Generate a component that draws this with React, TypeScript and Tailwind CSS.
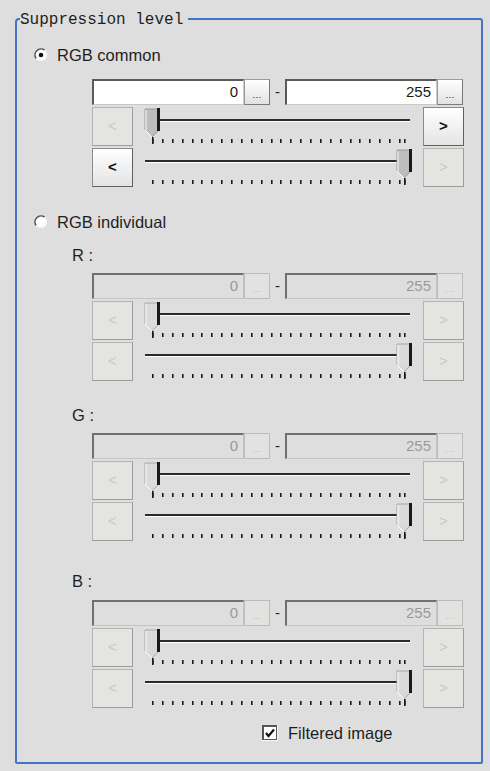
import React from "react";

const TICKS: number[] = Array.from({ length: 26 }, (_, i) => 19 + i * 9.88);

function Thumb({ x, disabled }: { x: number; disabled: boolean }) {
  const fill = disabled ? "#d8d8d8" : "#bdbdbd";
  return (
    <g>
      <polygon
        points={`${x},2 ${x + 14},2 ${x + 14},23 ${x + 7},30 ${x},23`}
        fill={fill}
        stroke={disabled ? "#a8a8a8" : "#9a9a9a"}
        strokeWidth="1"
      />
      <line x1={x + 1} y1={3} x2={x + 1} y2={23} stroke="#ffffff" strokeWidth="1" />
      <line x1={x + 7} y1={30} x2={x} y2={23} stroke="#ffffff" strokeWidth="1" />
      <rect x={x + 12} y={1} width={3} height={23} fill="#1a1a1a" />
      {disabled && (
        <g opacity="0.5">
          {Array.from({ length: 10 }, (_, k) => (
            <line key={k} x1={x + 2} y1={4 + k * 2} x2={x + 11} y2={4 + k * 2} stroke="#ffffff" strokeWidth="0.6" strokeDasharray="1 1" />
          ))}
        </g>
      )}
    </g>
  );
}

function SliderTrack({ pos, disabled }: { pos: "left" | "right"; disabled: boolean }) {
  const thumbX = pos === "left" ? 12 : 264;
  const tallTick = pos === "left" ? 19 : 271;
  return (
    <svg width="290" height="41" viewBox="0 0 290 41" className="block">
      {pos === "left" ? (
        <g>
          <rect x={26} y={12} width={251} height={2} fill="#2a2a2a" />
          <rect x={26} y={14} width={251} height={1} fill="#ffffff" />
        </g>
      ) : (
        <g>
          <rect x={12} y={12} width={253} height={2} fill="#2a2a2a" />
          <rect x={12} y={14} width={253} height={1} fill="#ffffff" />
        </g>
      )}
      {TICKS.map((t, i) => (
        <rect key={i} x={Math.round(t)} y={32} width={1.6} height={4} fill="#1a1a1a" />
      ))}
      <rect x={271} y={32} width={1.6} height={4} fill="#1a1a1a" />
      <rect x={tallTick} y={30} width={1.6} height={7} fill="#1a1a1a" />
      <Thumb x={thumbX} disabled={disabled} />
    </svg>
  );
}

function ArrowButton({ label, enabled }: { label: string; enabled: boolean }) {
  return enabled ? (
    <div className="w-[41px] h-[39px] flex items-center justify-center border border-[#8a8a8a] border-r-[#606060] border-b-[#606060] bg-gradient-to-b from-[#ffffff] to-[#e4e4e4] text-[15px] font-bold text-[#111] [font-family:'Liberation_Sans',Arial,sans-serif]">
      {label}
    </div>
  ) : (
    <div className="w-[41px] h-[39px] flex items-center justify-center border border-[#b4b4b4] border-r-[#9c9c9c] border-b-[#9c9c9c] bg-[#e4e4e0] text-[15px] text-[#c8c8c8] [font-family:'Liberation_Sans',Arial,sans-serif]">
      {label}
    </div>
  );
}

function DotsButton({ disabled }: { disabled: boolean }) {
  return (
    <div
      className={
        disabled
          ? "w-[26px] h-[26px] border border-[#bcbcbc] bg-[#e2e2e0] flex items-end justify-center pb-[6px]"
          : "w-[26px] h-[26px] border border-[#9a9a9a] border-r-[#7a7a7a] border-b-[#7a7a7a] bg-gradient-to-b from-[#ffffff] to-[#e2e2e2] flex items-end justify-center pb-[6px]"
      }
    >
      <div className="flex gap-[1px]">
        <span className={disabled ? "w-[2px] h-[1px] bg-[#d0d0d0]" : "w-[2px] h-[1px] bg-[#8a8a8a]"} />
        <span className={disabled ? "w-[2px] h-[1px] bg-[#d0d0d0]" : "w-[2px] h-[1px] bg-[#8a8a8a]"} />
        <span className={disabled ? "w-[2px] h-[1px] bg-[#d0d0d0]" : "w-[2px] h-[1px] bg-[#8a8a8a]"} />
      </div>
    </div>
  );
}

function ValueBox({ value, disabled }: { value: string; disabled: boolean }) {
  return (
    <div
      className={
        disabled
          ? "w-[152px] h-[26px] border-t-2 border-l-2 border-t-[#707070] border-l-[#707070] border-r border-b border-r-[#c4c4c4] border-b-[#c4c4c4] bg-[#dedede] flex items-center justify-end pr-[5px] text-[15px] text-[#9a9a9a] [font-family:'Liberation_Sans',Arial,sans-serif]"
          : "w-[152px] h-[26px] border-t-2 border-l-2 border-t-[#5a5a5a] border-l-[#5a5a5a] border-r border-b border-r-[#c8c8c8] border-b-[#c8c8c8] bg-white flex items-center justify-end pr-[5px] text-[15px] text-[#1a1a1a] [font-family:'Liberation_Sans',Arial,sans-serif]"
      }
    >
      {value}
    </div>
  );
}

function RangeControl({ disabled, topMargin }: { disabled: boolean; topMargin: string }) {
  return (
    <div className={`ml-[75px] flex flex-col ${topMargin}`}>
      <div className="flex items-center h-[26px]">
        <ValueBox value="0" disabled={disabled} />
        <DotsButton disabled={disabled} />
        <div className="w-[15px] text-center text-[15px] text-[#222] [font-family:'Liberation_Sans',Arial,sans-serif]">-</div>
        <ValueBox value="255" disabled={disabled} />
        <DotsButton disabled={disabled} />
      </div>
      <div className="mt-[2px] flex items-start h-[39px]">
        <ArrowButton label="<" enabled={false} />
        <SliderTrack pos="left" disabled={disabled} />
        <ArrowButton label=">" enabled={!disabled} />
      </div>
      <div className="mt-[2px] flex items-start h-[39px]">
        <ArrowButton label="<" enabled={!disabled} />
        <SliderTrack pos="right" disabled={disabled} />
        <ArrowButton label=">" enabled={false} />
      </div>
    </div>
  );
}

function Radio({ checked, label, topMargin }: { checked: boolean; label: string; topMargin: string }) {
  return (
    <div className={`flex items-center h-[20px] ml-[17px] ${topMargin}`}>
      <svg width="14" height="14" viewBox="0 0 14 14" className="block">
        <circle cx="7" cy="7" r="6" fill="#ffffff" />
        <path d="M2.2 10.6 A6 6 0 0 1 10.6 2.2" fill="none" stroke="#555" strokeWidth="1.6" />
        <path d="M10.6 2.2 A6 6 0 0 1 2.2 10.6" fill="none" stroke="#f4f4f4" strokeWidth="1.2" />
        {checked && <circle cx="7" cy="7" r="2.3" fill="#111" />}
      </svg>
      <span className="ml-[9px] text-[16.5px] leading-[20px] text-[#1e1e1e] [font-family:'Liberation_Sans',Arial,sans-serif]">{label}</span>
    </div>
  );
}

function SubLabel({ text, topMargin }: { text: string; topMargin: string }) {
  return (
    <div className={`ml-[55px] h-[20px] leading-[20px] text-[16.5px] text-[#1e1e1e] [font-family:'Liberation_Sans',Arial,sans-serif] ${topMargin}`}>
      {text}
    </div>
  );
}

export default function App() {
  return (
    <div className="w-[490px] h-[771px] bg-[#dedede] overflow-hidden pt-[18px]">
      <div className="relative ml-[15px] w-[468px] h-[746px] border-2 border-[#4472c4] rounded-tl-[4px] rounded-tr-[3px] rounded-br-[2px] rounded-bl-[2px]">
        <div className="absolute left-[3px] top-[-10px] bg-[#dedede] pr-[5px] text-[16px] leading-[20px] text-[#1e1e1e] [font-family:'Liberation_Mono','DejaVu_Sans_Mono',monospace]">
          Suppression level
        </div>
        <div className="flex flex-col">
          <Radio checked={true} label="RGB common" topMargin="mt-[25px]" />
          <RangeControl disabled={false} topMargin="mt-[14px]" />
          <Radio checked={false} label="RGB individual" topMargin="mt-[25px]" />
          <SubLabel text="R :" topMargin="mt-[13px]" />
          <RangeControl disabled={true} topMargin="mt-[8px]" />
          <SubLabel text="G :" topMargin="mt-[24px]" />
          <RangeControl disabled={true} topMargin="mt-[8px]" />
          <SubLabel text="B :" topMargin="mt-[30px]" />
          <RangeControl disabled={true} topMargin="mt-[9px]" />
          <div className="mt-[15px] flex items-center h-[20px] ml-[245px]">
            <svg width="16" height="16" viewBox="0 0 16 16" className="block">
              <rect x="0" y="0" width="16" height="16" fill="#f4f4f4" />
              <rect x="0" y="0" width="15" height="15" fill="#555" />
              <rect x="2" y="2" width="12" height="12" fill="#ffffff" />
              <path d="M4 8 L6.5 11 L12 4.5" fill="none" stroke="#111" strokeWidth="2.2" />
            </svg>
            <span className="ml-[10px] text-[16.5px] leading-[20px] text-[#1e1e1e] [font-family:'Liberation_Sans',Arial,sans-serif]">Filtered image</span>
          </div>
        </div>
      </div>
    </div>
  );
}
